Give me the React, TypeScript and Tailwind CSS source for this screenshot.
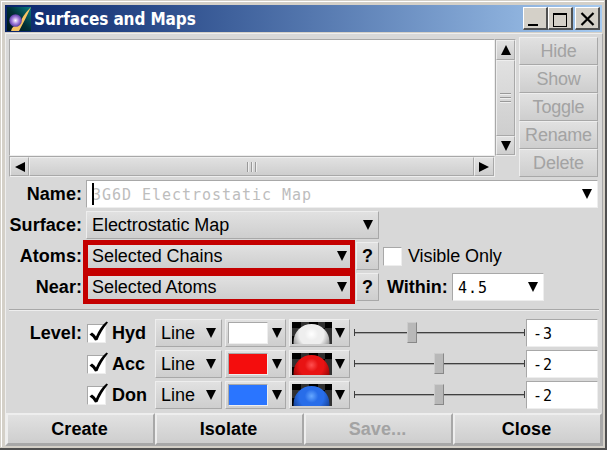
import type { ReactNode } from "react";

const raised =
  "border border-t-[#eeeeee] border-l-[#eeeeee] border-r-[#a8a8a8] border-b-[#a8a8a8] bg-gradient-to-b from-[#e1e1e1] to-[#cecece]";
const sunken =
  "border border-t-[#a8a8a8] border-l-[#a8a8a8] border-r-[#eeeeee] border-b-[#eeeeee] bg-white";
const mono = "pt-[2px] font-['DejaVu_Sans_Mono',monospace] text-[15px] leading-[24px] tracking-[0.97px]";

type Dir = "up" | "down" | "left" | "right";
const arrows: Record<Dir, string> = {
  up: "0,10 5,0 10,10",
  down: "0,0 10,0 5,10",
  left: "10,0 10,10 0,5",
  right: "0,0 10,5 0,10",
};

function Arrow({ dir = "down" }: { dir?: Dir }) {
  return (
    <svg width="10" height="10" viewBox="0 0 10 10" className="shrink-0">
      <polygon points={arrows[dir]} fill="#000" />
    </svg>
  );
}

function Label({ children }: { children: ReactNode }) {
  return (
    <div className="mr-[4px] flex w-[73px] shrink-0 justify-end whitespace-nowrap font-bold tracking-[0.05px]">
      {children}
    </div>
  );
}

function Check({ checked = false }: { checked?: boolean }) {
  return (
    <span className={`block h-[19px] w-[19px] shrink-0 ${sunken}`}>
      {checked && (
        <svg width="22" height="22" viewBox="0 0 22 22" className="-mt-[4px] overflow-visible">
          <path d="M1.500 13.500 L4 11.500 Q6.500 13 8 15.500 Q12 6 18.500 0.500 L20 1.500 Q13 10 9.500 19 L7 19.500 Q5 15.500 1.500 13.500Z" fill="#000" />
        </svg>
      )}
    </span>
  );
}

function WindowButton({ kind, className = "" }: { kind: string; className?: string }) {
  return (
    <div
      className={`flex h-[23px] w-[25px] border border-b-2 border-r-2 border-t-white border-l-white border-r-[#505050] border-b-[#505050] bg-[#d4d0c8] ${className}`}
    >
      <svg width="22" height="20" viewBox="0 0 22 20" shapeRendering={kind === "close" ? "auto" : "crispEdges"} fill="none" stroke="#000">
        {kind === "min" && <path d="M4 17h10" strokeWidth="2" />}
        {kind === "max" && (
          <>
            <path d="M4.500 5v13h13v-13" />
            <path d="M4 6h14" strokeWidth="2" />
          </>
        )}
        {kind === "close" && <path d="M5.500 5l12 12M17.500 5l-12 12" strokeWidth="2.200" />}
      </svg>
    </div>
  );
}

function Sphere({ id, light, main, dark }: { id: string; light: string; main: string; dark: string }) {
  return (
    <svg width="40" height="22" viewBox="0 0 40 22">
      <defs>
        <radialGradient id={id} cx="50%" cy="28%" r="62%">
          <stop offset="0" stopColor={light} />
          <stop offset="0.3" stopColor={main} />
          <stop offset="0.55" stopColor={main} />
          <stop offset="1" stopColor={dark} />
        </radialGradient>
      </defs>
      <rect width="40" height="22" fill="#000" />
      <path d="M9 0h8v6H9zM26 0h7v6h-7zM0 6h9v8H0zM33 6h7v8h-7zM33 14h7v8h-7z" fill="#303030" />
      <circle cx="19.500" cy="20" r="18" fill={`url(#${id})`} />
    </svg>
  );
}

const levels = [
  { name: "Hyd", swatch: "bg-white", value: "-3", thumb: "ml-[53px]", sphere: { light: "#ffffff", main: "#eeeeee", dark: "#808080" } },
  { name: "Acc", swatch: "bg-[#f40d0d]", value: "-2", thumb: "ml-[80px]", sphere: { light: "#ff5050", main: "#e81313", dark: "#800303" } },
  { name: "Don", swatch: "bg-[#2a75ff]", value: "-2", thumb: "ml-[80px]", sphere: { light: "#66a8ff", main: "#286de9", dark: "#123782" } },
];

function Slider({ thumb }: { thumb: string }) {
  return (
    <div className="relative ml-[4px] flex h-[28px] w-[171px] items-center">
      <svg width="171" height="9" className="absolute left-0 top-[9px]" shapeRendering="crispEdges">
        <path d="M0 5.500h171" stroke="#a5a5a5" />
        <path d="M0 4.500h171M0.500 1v7M170.500 1v7" stroke="#404040" />
      </svg>
      <div
        className={`relative -mt-px h-[21px] w-[10px] border border-t-[#cccccc] border-l-[#cccccc] border-r-[#888888] border-b-[#888888] bg-[#b8b8b8] ${thumb}`}
      />
    </div>
  );
}

export default function App() {
  return (
    <div className="flex h-[450px] w-[607px] flex-col overflow-hidden border-b-2 border-r-2 border-[#505050] bg-[#d4d0c8] font-['Liberation_Sans',Arial,sans-serif] text-[18px] leading-[26px] text-black">
      <div className="flex h-[448px] w-[605px] flex-col border border-[#d4d0c8]">
        <div className="flex h-[446px] flex-col border-l border-t border-white px-[3px] pt-[3px]">
          <div className="flex h-[27px] w-[597px] shrink-0 items-center bg-gradient-to-r from-[#0a246a] to-[#a6caf0] pl-[2px]">
            <svg width="24" height="24" viewBox="0 0 24 24">
              <defs>
                <linearGradient id="teal" x1="0" x2="1" y1="1" y2="0">
                  <stop offset="0" stopColor="#001519" />
                  <stop offset="0.5" stopColor="#002f36" />
                  <stop offset="1" stopColor="#087c82" />
                </linearGradient>
                <radialGradient id="orb">
                  <stop offset="0" stopColor="#ffffff" />
                  <stop offset="0.5" stopColor="#aa89df" />
                  <stop offset="1" stopColor="#573aa5" />
                </radialGradient>
              </defs>
              <rect width="24" height="24" fill="url(#teal)" />
              <path d="M24 0Q15 9 12 18Q5 18 4 24h8Q18 13 24 0Z" fill="#f5c363" />
              <circle cx="8.500" cy="13.500" r="6.300" fill="url(#orb)" />
            </svg>
            <span className="ml-[3px] whitespace-nowrap font-['DejaVu_Sans_Condensed','DejaVu_Sans',sans-serif] text-[17px] font-bold tracking-[-0.1px] text-white [font-stretch:condensed]">
              Surfaces and Maps
            </span>
            <div className="ml-auto mr-[2px] flex">
              <WindowButton kind="min" />
              <WindowButton kind="max" />
              <WindowButton kind="close" className="ml-[2px]" />
            </div>
          </div>

          <div className="mt-[1px] flex h-[413px] w-[598px] shrink-0 flex-col border-b border-l border-r border-t border-l-[#eeeeee] border-t-[#eeeeee] border-b-[#a8a8a8] border-r-[#a8a8a8] bg-[#d8d8d8]">
            <div className="flex h-[143px] shrink-0 pl-[3px] pt-[3px]">
              <div className="mt-[2px] w-[486px]">
                <div className="h-[117px] border border-b-[#eeeeee] border-l-[#a8a8a8] border-r-[#eeeeee] border-t-[#a8a8a8] bg-white" />
                <div className="flex h-[21px] border border-b-[#eeeeee] border-l-[#a8a8a8] border-r-[#eeeeee] border-t-[#a8a8a8]">
                  <div className={`flex w-[19px] items-center justify-center ${raised}`}><Arrow dir="left" /></div>
                  <div className={`flex flex-1 items-center justify-center gap-[2px] ${raised}`}>
                    {[0, 1, 2].map((i) => <i key={i} className="h-[10px] w-[2px] border-l border-r border-l-[#999999] border-r-[#eeeeee]" />)}
                  </div>
                  <div className={`flex w-[20px] items-center justify-center ${raised}`}><Arrow dir="right" /></div>
                </div>
              </div>
              <div className="mt-[2px] flex h-[117px] w-[21px] flex-col border border-b-[#eeeeee] border-l-[#a8a8a8] border-r-[#eeeeee] border-t-[#a8a8a8]">
                <div className={`flex h-[20px] items-center justify-center ${raised}`}><Arrow dir="up" /></div>
                <div className={`flex flex-1 flex-col items-center justify-center gap-[2px] ${raised}`}>
                  {[0, 1, 2].map((i) => <i key={i} className="h-[2px] w-[11px] border-b border-t border-b-[#eeeeee] border-t-[#999999]" />)}
                </div>
                <div className={`flex h-[19px] items-center justify-center ${raised}`}><Arrow /></div>
              </div>
              <div className="ml-[3px] w-[79px]">
                {["Hide", "Show", "Toggle", "Rename", "Delete"].map((t) => (
                  <div key={t} className={`h-[28px] text-center tracking-[-0.2px] text-[#a3a3a3] ${raised}`}>{t}</div>
                ))}
              </div>
            </div>

            <div className="flex h-[132px] shrink-0 flex-col gap-[3px] pl-[3px] pt-[3px]">
              <div className="flex h-[28px] shrink-0 items-center">
                <Label>Name:</Label>
                <div className={`flex h-[28px] w-[512px] items-center justify-between pl-[5px] pr-[5px] ${sunken}`}>
                  <span className={`${mono} relative whitespace-pre text-[#bdbdbd]`}>
                    3G6D Electrostatic Map
                    <i className="absolute left-0 top-[2px] h-[22px] w-[2px] bg-black" />
                  </span>
                  <Arrow />
                </div>
              </div>
              <div className="flex h-[28px] shrink-0 items-center">
                <Label>Surface:</Label>
                <div className={`flex h-[28px] w-[293px] items-center justify-between pl-[5px] pr-[5px] tracking-[-0.05px] ${raised}`}>Electrostatic Map<Arrow /></div>
              </div>
              <div className="flex h-[28px] shrink-0 items-center">
                <Label>Atoms:</Label>
                <div className="-mx-[3px] flex h-[33px] w-[272px] shrink-0 items-center justify-between border-[5px] border-[#c40000] bg-gradient-to-b from-[#e1e1e1] to-[#cecece] pl-[4px] pr-[3px] tracking-[-0.05px]">Selected Chains<Arrow /></div>
                <div className={`ml-[4px] h-[28px] w-[23px] text-center font-bold ${raised}`}>?</div>
                <div className="ml-[4px]"><Check /></div>
                <span className="ml-[6px] tracking-[-0.08px]">Visible Only</span>
              </div>
              <div className="flex h-[28px] shrink-0 items-center">
                <Label>Near:</Label>
                <div className="-mx-[3px] flex h-[33px] w-[272px] shrink-0 items-center justify-between border-[5px] border-[#c40000] bg-gradient-to-b from-[#e1e1e1] to-[#cecece] pl-[4px] pr-[3px] tracking-[-0.05px]">Selected Atoms<Arrow /></div>
                <div className={`ml-[4px] h-[28px] w-[23px] text-center font-bold ${raised}`}>?</div>
                <span className="ml-[8px] w-[65px] font-bold">Within:</span>
                <div className={`flex h-[28px] w-[92px] items-center justify-between pl-[5px] pr-[5px] ${sunken}`}><span className={mono}>4.5</span><Arrow /></div>
              </div>
            </div>

            <div className="mx-[3px] h-[2px] shrink-0 border-b border-t border-b-[#eeeeee] border-t-[#a8a8a8]" />

            <div className="flex h-[102px] shrink-0 flex-col gap-[3px] pl-[3px] pt-[8px]">
              {levels.map((l, i) => (
                <div key={l.name} className="flex h-[28px] shrink-0 items-center">
                  <Label>{i === 0 ? "Level:" : ""}</Label>
                  <div className="ml-[1px]"><Check checked /></div>
                  <span className="ml-[6px] w-[43px] font-bold">{l.name}</span>
                  <div className={`flex h-[28px] w-[67px] items-center justify-between pl-[5px] pr-[5px] ${raised}`}>Line<Arrow /></div>
                  <div className={`ml-[3px] flex h-[28px] w-[61px] items-center justify-between pl-[2px] pr-[3px] ${raised}`}>
                    <div className={`h-[22px] w-[40px] border border-b-[#eeeeee] border-l-[#a8a8a8] border-r-[#eeeeee] border-t-[#a8a8a8] ${l.swatch}`} /><Arrow />
                  </div>
                  <div className={`ml-[3px] flex h-[28px] w-[61px] items-center justify-between pl-[2px] pr-[4px] ${raised}`}>
                    <Sphere id={l.name} {...l.sphere} /><Arrow />
                  </div>
                  <Slider thumb={l.thumb} />
                  <div className={`ml-[1px] flex h-[28px] w-[72px] items-center pl-[6px] ${sunken}`}><span className={mono}>{l.value}</span></div>
                </div>
              ))}
            </div>

            <div className="flex h-[32px] shrink-0">
              {["Create", "Isolate", "Save...", "Close"].map((t) => (
                <div key={t} className={`w-[149px] border-2 border-b-[#a8a8a8] border-l-[#eeeeee] border-r-[#a8a8a8] border-t-[#eeeeee] bg-gradient-to-b from-[#e1e1e1] to-[#cecece] pr-[2px] text-center font-bold leading-[28px] tracking-[0.1px] ${t === "Save..." ? "text-[#a3a3a3]" : ""}`}>{t}</div>
              ))}
            </div>
          </div>
        </div>
      </div>
    </div>
  );
}
